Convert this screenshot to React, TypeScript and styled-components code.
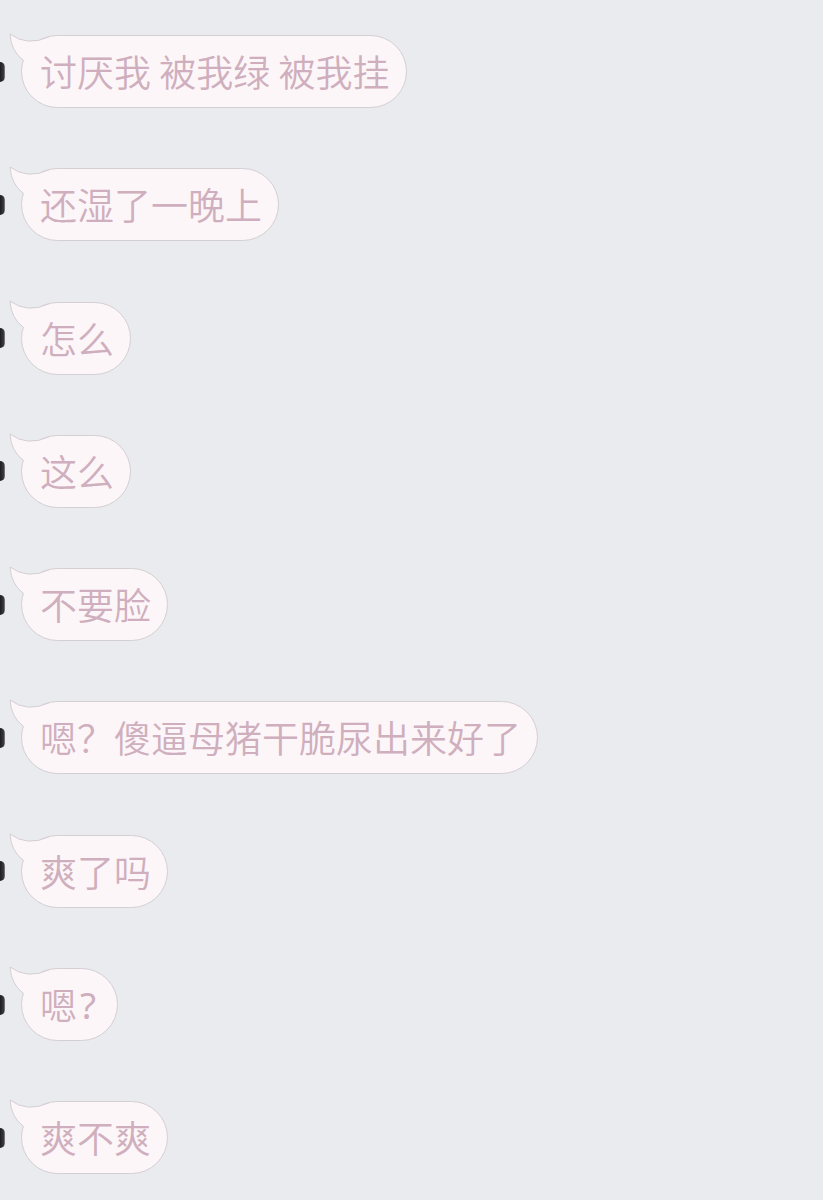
import React from "react";
import styled, { createGlobalStyle } from "styled-components";

const Global = createGlobalStyle`
  html, body { margin: 0; padding: 0; background: #e9ebef; }
  body { font-family: "Noto Sans CJK SC", "Noto Sans", sans-serif; }
`;

const Page = styled.div`
  width: 823px;
  height: 1200px;
  overflow: hidden;
  background: #e9ebef;
  display: flex;
  flex-direction: column;
  gap: 60.3px;
  padding-top: 35px;
  box-sizing: border-box;
`;

const Row = styled.div`
  display: flex;
  align-items: center;
  gap: 16px;
`;

const Avatar = styled.div`
  width: 5px;
  height: 20px;
  border-radius: 0 10px 10px 0;
  background: linear-gradient(90deg, #1e1e20 0%, #3a3a3e 70%, #8a8a90 100%);
  flex: none;
`;

const Bubble = styled.div`
  position: relative;
  height: 73px;
  box-sizing: border-box;
  border: 1px solid #d4cfd2;
  border-radius: 37px;
  background: #fdf6f9;
  padding: 0 16px 0 18px;
  display: flex;
  align-items: center;
  font-size: 37px;
  font-weight: 350;
  line-height: 1;
  color: #cfafbd;
  white-space: pre;
`;

const HalfMark = styled.span`
  display: inline-block;
  width: 24px;
  padding-left: 3px;
  box-sizing: border-box;
  font-family: "Noto Sans", sans-serif;
  font-weight: 400;
  font-size: 37px;
`;

const Tail = styled.svg`
  position: absolute;
  left: -15px;
  top: -5px;
  width: 50px;
  height: 40px;
  overflow: visible;
`;

const BubbleTail = () => (
  <Tail viewBox="0 0 50 40">
    <path d="M43,5.5 Q20,16 3,3 Q4,20 16,29 L30,31 L43,20 Z" fill="#fdf6f9" />
    <path d="M43,5.5 Q20,16 3,3 Q4,20 16,29" fill="none" stroke="#d4cfd2" strokeWidth="1" />
  </Tail>
);

const messages: React.ReactNode[] = [
  "讨厌我 被我绿 被我挂",
  "还湿了一晚上",
  "怎么",
  "这么",
  "不要脸",
  "嗯？傻逼母猪干脆尿出来好了",
  "爽了吗",
  <>嗯<HalfMark>?</HalfMark></>,
  "爽不爽",
];

export default function App() {
  return (
    <>
      <Global />
      <Page>
        {messages.map((m, i) => (
          <Row key={i}>
            <Avatar />
            <Bubble>
              <BubbleTail />
              {m}
            </Bubble>
          </Row>
        ))}
      </Page>
    </>
  );
}
